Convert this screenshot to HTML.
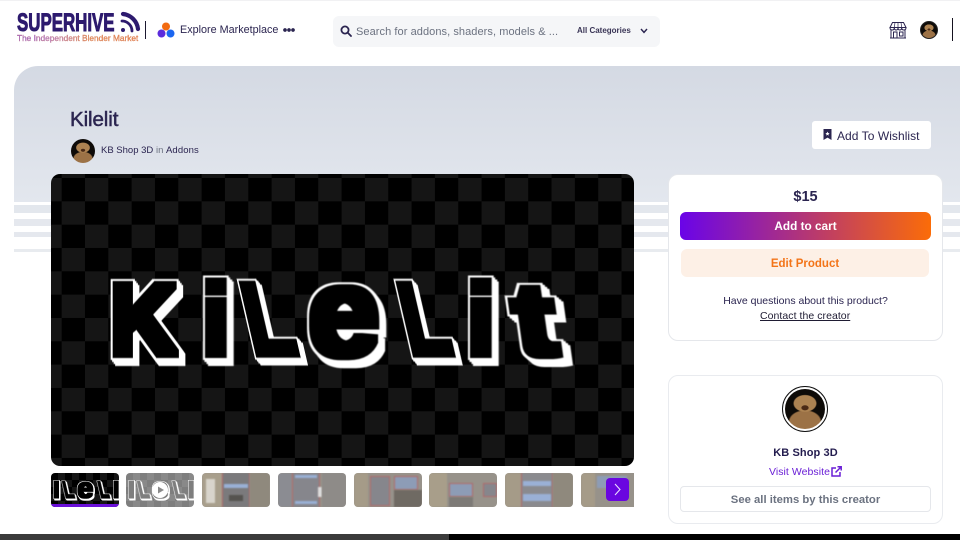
<!DOCTYPE html>
<html lang="en"><head><meta charset="utf-8"><title>Kilelit</title>
<style>
*{box-sizing:border-box;margin:0;padding:0}
html,body{width:960px;height:540px;overflow:hidden;background:#fff}
body{position:relative;font-family:"Liberation Sans",sans-serif;color:#2b2550}
.a{position:absolute;white-space:nowrap}
.c{text-align:center}
.checker{background-color:#000;background-image:repeating-conic-gradient(#151515 0 25%,#000 0 50%);background-size:46.67px 46.67px;background-position:10.67px 4px}
.logo{position:absolute;left:0;top:0;width:583px;height:292px}
.logo span{position:absolute;line-height:1;font-weight:700;color:#000;font-size:100px;top:96px;transform-origin:0 0;filter:url(#fat)}
.k{left:59px;transform:scaleX(.92)}
.i1{left:151px}
.l1{left:183px;text-transform:uppercase;transform:skewX(13deg) scaleX(.75)}
.logo .e{left:257px;top:77px;font-size:124px;transform:scaleX(1.04)}
.l2{left:340px;text-transform:uppercase;transform:skewX(13deg) scaleX(.72)}
.i2{left:416px}
.t{left:456px;transform:skewX(8deg) scaleX(1.22)}
.thumb{position:absolute;top:473px;width:68px;height:34px;border-radius:4px;overflow:hidden}
.thumb .logo{transform-origin:0 0;transform:translate(-31.6px,-16px) scale(.225)}
.shot{background:#97928a}
.shot i{position:absolute;display:block;filter:blur(.8px)}
.av{background:radial-gradient(ellipse 10% 7% at 50% 47%,#4a2a16 0 80%,transparent 100%),radial-gradient(ellipse 30% 22% at 50% 36%,#ad8352 0 90%,transparent 100%),radial-gradient(ellipse 42% 30% at 50% 82%,#9c7246 0 90%,transparent 100%),#0e0b08;border-radius:50%}
</style></head><body>
<svg width="0" height="0" style="position:absolute"><defs>
<filter id="fat" x="-60%" y="-40%" width="220%" height="180%" color-interpolation-filters="sRGB">
<feMorphology in="SourceAlpha" operator="dilate" radius="4" result="core"/>
<feMorphology in="SourceAlpha" operator="dilate" radius="6" result="o"/>
<feColorMatrix in="o" type="matrix" values="0 0 0 0 1 0 0 0 0 1 0 0 0 0 1 0 0 0 1 0" result="w"/>
<feOffset in="w" dx="1.7" dy="2" result="w1"/>
<feOffset in="w" dx="3.4" dy="4" result="w2"/>
<feOffset in="w" dx="5" dy="6" result="w3"/>
<feMerge result="m"><feMergeNode in="w3"/><feMergeNode in="w2"/><feMergeNode in="w1"/><feMergeNode in="w"/><feMergeNode in="core"/></feMerge>
<feGaussianBlur in="m" stdDeviation=".4"/>
</filter></defs></svg>

<div class="a" style="left:0;top:0;width:960px;height:1px;background:#f1f1f3"></div>

<!-- hero -->
<div class="a" style="left:14px;top:66px;width:946px;height:136px;border-radius:24px 0 0 0;background:linear-gradient(#d4d9e3,#e3e7ee)"></div>
<div class="a" style="left:14px;top:205px;width:946px;height:8px;background:#e3e7ed"></div>
<div class="a" style="left:14px;top:219px;width:946px;height:7px;background:#e5e8ee"></div>
<div class="a" style="left:14px;top:232px;width:946px;height:5px;background:#e5e8ee"></div>
<div class="a" style="left:14px;top:249px;width:946px;height:3px;background:#e8ebef"></div>

<!-- header -->
<div class="a" style="left:17px;top:9px;font-size:25px;line-height:28px;font-weight:700;color:#2d1a6e;transform-origin:0 0;transform:scaleX(.675);-webkit-text-stroke:1px #2d1a6e">SUPERHIVE</div>
<svg class="a" style="left:119px;top:11px" width="22" height="22" viewBox="0 0 22 22" fill="none" stroke="#2d1a6e" stroke-linecap="round"><path d="M4 3 A17 17 0 0 1 19 18" stroke-width="4.2"/><path d="M3 10 A10 10 0 0 1 13 20" stroke-width="2.8"/><circle cx="4" cy="19" r="2" fill="#2d1a6e" stroke="none"/></svg>
<div class="a" style="left:17px;top:33px;font-size:8.3px;line-height:11px;background:linear-gradient(90deg,#8a4de0,#b37ad0 30%,#e98a50 60%,#ee7a3c);-webkit-background-clip:text;background-clip:text;color:transparent;-webkit-text-stroke:.2px #d08a70">The Independent Blender Market</div>
<div class="a" style="left:145px;top:21px;width:1px;height:18px;background:#1c1830"></div>
<svg class="a" style="left:157px;top:21px" width="18" height="18" viewBox="0 0 18 18"><circle cx="9" cy="5.5" r="4" fill="#f26b12"/><circle cx="4.5" cy="12.5" r="4" fill="#5b2bdc"/><circle cx="13.5" cy="12.5" r="4" fill="#1b66f0"/></svg>
<div class="a" style="left:180px;top:24px;font-size:10.8px;line-height:13px">Explore Marketplace</div>
<div class="a" style="left:283px;top:28px;width:12px;height:4px;background:radial-gradient(circle at 2px 2px,#2b2550 1.7px,transparent 2px) 0 0/4px 4px repeat-x"></div>

<div class="a" style="left:333px;top:16px;width:327px;height:31px;border-radius:6px;background:#f5f6f8"></div>
<svg class="a" style="left:340px;top:25px" width="12" height="12" viewBox="0 0 12 12" fill="none" stroke="#2b2550" stroke-width="1.8"><circle cx="5" cy="5" r="3.6"/><path d="M7.8 7.8 L11 11" stroke-linecap="round"/></svg>
<div class="a" style="left:356px;top:25px;font-size:11px;line-height:14px;color:#6c7280;letter-spacing:.07px">Search for addons, shaders, models &amp; ...</div>
<div class="a" style="left:577px;top:25px;font-size:8px;line-height:11px;font-weight:700;color:#3a3556">All Categories</div>
<svg class="a" style="left:640px;top:28px" width="8" height="6" viewBox="0 0 8 6" fill="none" stroke="#2b2550" stroke-width="1.4"><path d="M1 1 L4 4.4 L7 1"/></svg>

<svg class="a" style="left:889px;top:21px" width="18" height="18" viewBox="0 0 18 18" fill="none" stroke="#2b2550" stroke-width="1"><path d="M3.5 1.5 H14.5 L17 6.5 H1 Z"/><path d="M6 1.5 L5.3 6.5 M9 1.5 V6.5 M12 1.5 L12.7 6.5" stroke-width=".7"/><path d="M1 6.5 Q1 9 3.2 9 Q5.3 9 5.3 6.5 Q5.3 9 7.2 9 Q9 9 9 6.5 Q9 9 10.8 9 Q12.7 9 12.7 6.5 Q12.7 9 14.8 9 Q17 9 17 6.5"/><path d="M2 9 V17 H16 V9 M1 17 H17 M4.5 17 V11 H8 V17 M10.5 11 H14 V15 H10.5 Z"/></svg>
<div class="a av" style="left:920px;top:21px;width:18px;height:18px;border:1px solid #222"></div>
<div class="a" style="left:952px;top:18px;width:1px;height:23px;background:#15121f"></div>

<!-- title -->
<div class="a" style="left:70px;top:108px;font-size:20.5px;line-height:24px;color:#2b2550;-webkit-text-stroke:.5px #2b2550;letter-spacing:-.1px">Kilelit</div>
<div class="a av" style="left:71px;top:139px;width:24px;height:24px"></div>
<div class="a" style="left:101px;top:145px;font-size:9.5px;line-height:12px">KB Shop 3D</div>
<div class="a" style="left:156px;top:145px;font-size:9.5px;line-height:12px;color:#6c7280">in</div>
<div class="a" style="left:166px;top:145px;font-size:9.5px;line-height:12px;letter-spacing:.1px">Addons</div>

<div class="a" style="left:812px;top:121px;width:119px;height:28px;background:#fff;border-radius:3px"></div>
<svg class="a" style="left:823px;top:129px" width="9" height="11" viewBox="0 0 9 11"><path d="M0.5 0 H8.5 V11 L4.5 8.6 L0.5 11 Z" fill="#2b2550"/><path d="M4.5 2.6 L5.2 4 L6.6 4.2 L5.5 5.2 L5.8 6.6 L4.5 5.9 L3.2 6.6 L3.5 5.2 L2.4 4.2 L3.8 4 Z" fill="#fff"/></svg>
<div class="a" style="left:837px;top:129px;font-size:12px;line-height:14px;letter-spacing:.05px">Add To Wishlist</div>

<!-- main image -->
<div class="a checker" style="left:51px;top:174px;width:583px;height:292px;border-radius:9px;overflow:hidden">
  <div class="logo"><span class="k">K</span><span class="i1">i</span><span class="l1">l</span><span class="e">e</span><span class="l2">l</span><span class="i2">i</span><span class="t">t</span></div>
</div>

<!-- thumbs -->
<div class="thumb checker" style="left:51px;background-position:0 0;background-size:14px 14px">
  <div class="logo"><span class="k">K</span><span class="i1">i</span><span class="l1">l</span><span class="e">e</span><span class="l2">l</span><span class="i2">i</span></div>
  <div class="a" style="left:0;bottom:0;width:68px;height:3px;background:#6a10d8"></div>
</div>
<div class="thumb checker" style="left:126px;background-position:0 0;background-size:14px 14px;opacity:.5">
  <div class="logo"><span class="k">K</span><span class="i1">i</span><span class="l1">l</span><span class="e">e</span><span class="l2">l</span><span class="i2">i</span></div>
</div>
<svg class="a" style="left:152px;top:482px" width="16" height="16" viewBox="0 0 16 16"><circle cx="8" cy="8" r="8" fill="#fff"/><path d="M6 4.5 L12 8 L6 11.5 Z" fill="#8a8a8a"/></svg>

<div class="thumb shot" style="left:202px"><i style="left:0;top:0;width:20px;height:34px;background:#a89f8c"></i><i style="left:4px;top:6px;width:9px;height:24px;background:#d8d4cc"></i><i style="left:20px;top:0;width:28px;height:34px;background:#7b7a7c;border-left:1px solid #b06a6a;border-right:1px solid #b06a6a"></i><i style="left:22px;top:11px;width:24px;height:4px;background:#9ab0d6"></i><i style="left:27px;top:22px;width:14px;height:6px;background:#55534f"></i><i style="left:48px;top:0;width:20px;height:34px;background:#8f897d"></i></div>
<div class="thumb shot" style="left:278px"><i style="left:0;top:0;width:14px;height:34px;background:#8b8c92"></i><i style="left:14px;top:0;width:28px;height:34px;background:#86868c;border-left:1px solid #b06a6a;border-right:1px solid #b06a6a"></i><i style="left:17px;top:2px;width:22px;height:3px;background:#9ab0d6"></i><i style="left:17px;top:28px;width:22px;height:3px;background:#9ab0d6"></i><i style="left:40px;top:14px;width:4px;height:10px;background:#ddd"></i><i style="left:44px;top:0;width:24px;height:34px;background:#8e8b88"></i></div>
<div class="thumb shot" style="left:354px"><i style="left:0;top:0;width:14px;height:34px;background:#a59b88"></i><i style="left:16px;top:3px;width:20px;height:30px;background:#86868c;border:1px solid #b06a6a"></i><i style="left:40px;top:3px;width:24px;height:14px;background:#8d9cb6;border:1px solid #b06a6a"></i><i style="left:40px;top:17px;width:28px;height:17px;background:#6f6a63"></i></div>
<div class="thumb shot" style="left:429px"><i style="left:0;top:0;width:18px;height:34px;background:#a89e8a"></i><i style="left:20px;top:10px;width:24px;height:14px;background:#8d9cb6;border:1px solid #b06a6a"></i><i style="left:20px;top:24px;width:24px;height:10px;background:#7d7a76"></i><i style="left:54px;top:10px;width:14px;height:14px;background:#86868c;border:1px solid #b06a6a"></i></div>
<div class="thumb shot" style="left:505px"><i style="left:0;top:0;width:16px;height:34px;background:#a59b88"></i><i style="left:16px;top:0;width:32px;height:34px;background:#8a8a8e;border-left:1px solid #b06a6a;border-right:1px solid #b06a6a"></i><i style="left:18px;top:8px;width:28px;height:5px;background:#9ab0d6"></i><i style="left:18px;top:21px;width:28px;height:7px;background:#9ab0d6"></i><i style="left:48px;top:0;width:20px;height:34px;background:#8f897d"></i></div>
<div class="thumb shot" style="left:581px;width:53px;border-radius:4px 0 0 4px"><i style="left:0;top:0;width:14px;height:34px;background:#a59b88"></i><i style="left:16px;top:3px;width:30px;height:12px;background:#8d9cb6"></i></div>
<div class="a" style="left:606px;top:478px;width:23px;height:23px;border-radius:4px;background:#6a06e0"></div>
<svg class="a" style="left:613px;top:483px" width="9" height="13" viewBox="0 0 9 13" fill="none" stroke="#e8dcff" stroke-width="1.1"><path d="M2 1 L7 6.5 L2 12"/></svg>

<!-- purchase card -->
<div class="a" style="left:668px;top:174px;width:275px;height:167px;background:#fff;border:1px solid #e5e7eb;border-radius:10px"></div>
<div class="a c" style="left:668px;width:275px;top:188px;font-size:14.5px;line-height:18px;font-weight:700">$15</div>
<div class="a c" style="left:680px;top:212px;width:251px;height:28px;border-radius:6px;background:linear-gradient(90deg,#6a04e8,#c2405f 60%,#fb6c08);color:#fff;font-size:11.8px;line-height:29px;font-weight:700">Add to cart</div>
<div class="a c" style="left:681px;top:249px;width:248px;height:28px;border-radius:6px;background:#fdf0e6;color:#f37418;font-size:11.5px;line-height:30px;font-weight:700">Edit Product</div>
<div class="a c" style="left:668px;width:275px;top:295px;font-size:10.5px;line-height:13px">Have questions about this product?</div>
<div class="a" style="left:760px;top:310px;font-size:10.5px;line-height:13px;text-decoration:underline;letter-spacing:.05px;color:#1f1c33">Contact the creator</div>

<!-- creator card -->
<div class="a" style="left:668px;top:375px;width:275px;height:149px;background:#fff;border:1px solid #e9ebef;border-radius:10px"></div>
<div class="a" style="left:782px;top:386px;width:46px;height:46px;border-radius:50%;border:1.5px solid #111;padding:2px"><div class="av" style="width:100%;height:100%"></div></div>
<div class="a c" style="left:668px;width:275px;top:446px;font-size:11px;line-height:14px;font-weight:700;color:#231c4e;letter-spacing:.1px">KB Shop 3D</div>
<div class="a" style="left:769px;top:466px;font-size:10.5px;line-height:13px;color:#6a1fd6;letter-spacing:.05px">Visit Website</div>
<svg class="a" style="left:831px;top:466px" width="11" height="11" viewBox="0 0 11 11" fill="none" stroke="#6a1fd6" stroke-width="1.5"><path d="M5 2 H1 V10 H9 V6"/><path d="M4.5 6.5 L10 1 M6.5 .8 H10.2 V4.5"/></svg>
<div class="a c" style="left:680px;top:486px;width:251px;height:26px;border:1px solid #e5e7eb;border-radius:4px;color:#6b7280;font-size:11.3px;line-height:26px;font-weight:700">See all items by this creator</div>

<!-- bottom bar -->
<div class="a" style="left:0;top:534px;width:449px;height:6px;background:#3b3b3b"></div>
<div class="a" style="left:449px;top:534px;width:511px;height:6px;background:#000"></div>
</body></html>
